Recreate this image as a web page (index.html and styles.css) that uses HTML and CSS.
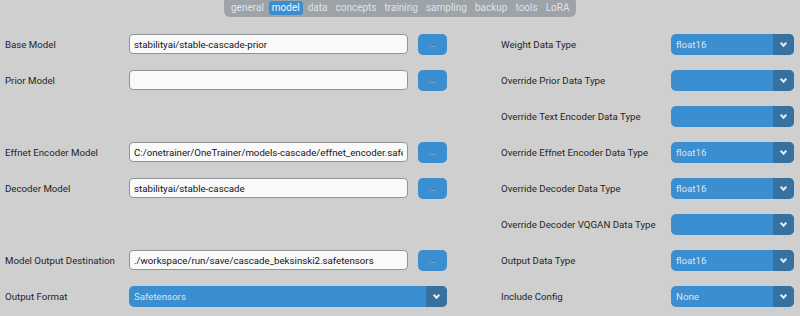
FILE: index.html
```html
<!DOCTYPE html>
<html lang="en">
<head>
  <meta charset="UTF-8" />
  <title>OneTrainer - model</title>
  <link rel="stylesheet" href="styles.css">
</head>
<body>
  <div class="tabs">
    <span class="tab">general</span>
    <span class="tab active">model</span>
    <span class="tab">data</span>
    <span class="tab">concepts</span>
    <span class="tab">training</span>
    <span class="tab">sampling</span>
    <span class="tab">backup</span>
    <span class="tab">tools</span>
    <span class="tab">LoRA</span>
  </div>

  <div class="form">
    <!-- row 1 -->
    <div class="label">Base Model</div>
    <input class="entry" value="stabilityai/stable-cascade-prior">
    <div class="browse"><button>...</button></div>
    <div></div>
    <div class="label">Weight Data Type</div>
    <div class="combo"><span class="value">float16</span><span class="arrow"></span></div>

    <!-- row 2 -->
    <div class="label">Prior Model</div>
    <input class="entry" value="">
    <div class="browse"><button>...</button></div>
    <div></div>
    <div class="label">Override Prior Data Type</div>
    <div class="combo"><span class="value"></span><span class="arrow"></span></div>

    <!-- row 3 -->
    <div></div><div></div><div></div><div></div>
    <div class="label">Override Text Encoder Data Type</div>
    <div class="combo"><span class="value"></span><span class="arrow"></span></div>

    <!-- row 4 -->
    <div class="label">Effnet Encoder Model</div>
    <input class="entry" value="C:/onetrainer/OneTrainer/models-cascade/effnet_encoder.safetensors">
    <div class="browse"><button>...</button></div>
    <div></div>
    <div class="label">Override Effnet Encoder Data Type</div>
    <div class="combo"><span class="value">float16</span><span class="arrow"></span></div>

    <!-- row 5 -->
    <div class="label">Decoder Model</div>
    <input class="entry" value="stabilityai/stable-cascade">
    <div class="browse"><button>...</button></div>
    <div></div>
    <div class="label">Override Decoder Data Type</div>
    <div class="combo"><span class="value">float16</span><span class="arrow"></span></div>

    <!-- row 6 -->
    <div></div><div></div><div></div><div></div>
    <div class="label">Override Decoder VQGAN Data Type</div>
    <div class="combo"><span class="value"></span><span class="arrow"></span></div>

    <!-- row 7 -->
    <div class="label">Model Output Destination</div>
    <input class="entry" value="./workspace/run/save/cascade_beksinski2.safetensors">
    <div class="browse"><button>...</button></div>
    <div></div>
    <div class="label">Output Data Type</div>
    <div class="combo"><span class="value">float16</span><span class="arrow"></span></div>

    <!-- row 8 -->
    <div class="label">Output Format</div>
    <div class="combo wide"><span class="value">Safetensors</span><span class="arrow"></span></div>
    <div></div>
    <div class="label">Include Config</div>
    <div class="combo"><span class="value">None</span><span class="arrow"></span></div>
  </div>
</body>
</html>
```

FILE: styles.css
```css
* {
  margin: 0;
  padding: 0;
  box-sizing: border-box;
}

html, body {
  width: 800px;
  height: 316px;
  overflow: hidden;
  background: #cfcfcf;
  font-family: Roboto, "Noto Sans", sans-serif;
  font-size: 9.7px;
  color: #1f1f1f;
}

.tabs {
  display: inline-flex;
  margin-left: 224px;
  margin-top: -4px;
  padding: 5px 4px 2px;
  background: #9ea3a7;
  border-radius: 6px;
  gap: 2px;
  height: 21px;
}

.tab {
  padding: 0 3px;
  height: 14px;
  line-height: 14px;
  font-size: 10px;
  color: #dce4ee;
  border-radius: 3px;
}

.tab.active {
  background: #3b8ed0;
  color: #f2f6fa;
}

.form {
  display: grid;
  grid-template-columns: 124px 279px 39px 54px 170px 123px;
  grid-auto-rows: 21px;
  row-gap: 15px;
  padding-left: 5px;
  margin-top: 17px;
}

.label {
  display: flex;
  align-items: center;
  white-space: nowrap;
}

.entry {
  display: block;
  width: 279px;
  height: 20px;
  background: #f9f9fa;
  border: 1px solid #8f959a;
  border-radius: 4px;
  padding: 0 4px;
  font-family: Roboto, "Noto Sans", sans-serif;
  font-size: 9.7px;
  color: #141414;
  outline: none;
}

.browse {
  display: flex;
  justify-content: flex-end;
}

.browse button {
  width: 29px;
  height: 21px;
  border: none;
  border-radius: 5px;
  background: #3b8ed0;
  color: #c8dcef;
  font-family: Roboto, sans-serif;
  font-size: 8px;
  line-height: 21px;
}

.combo {
  display: flex;
  height: 21px;
  border-radius: 5px;
  overflow: hidden;
  background: #3b8ed0;
  color: #dce4ee;
}

.combo.wide {
  grid-column: span 2;
}

.combo .value {
  flex: 1;
  padding-left: 5px;
  line-height: 21px;
}

.combo .arrow {
  width: 21px;
  background: #36719f;
  position: relative;
}

.combo .arrow::after {
  content: "";
  position: absolute;
  left: 8px;
  top: 7px;
  width: 3px;
  height: 3px;
  border-right: 2px solid #e8eef5;
  border-bottom: 2px solid #e8eef5;
  transform: rotate(45deg);
}
```
